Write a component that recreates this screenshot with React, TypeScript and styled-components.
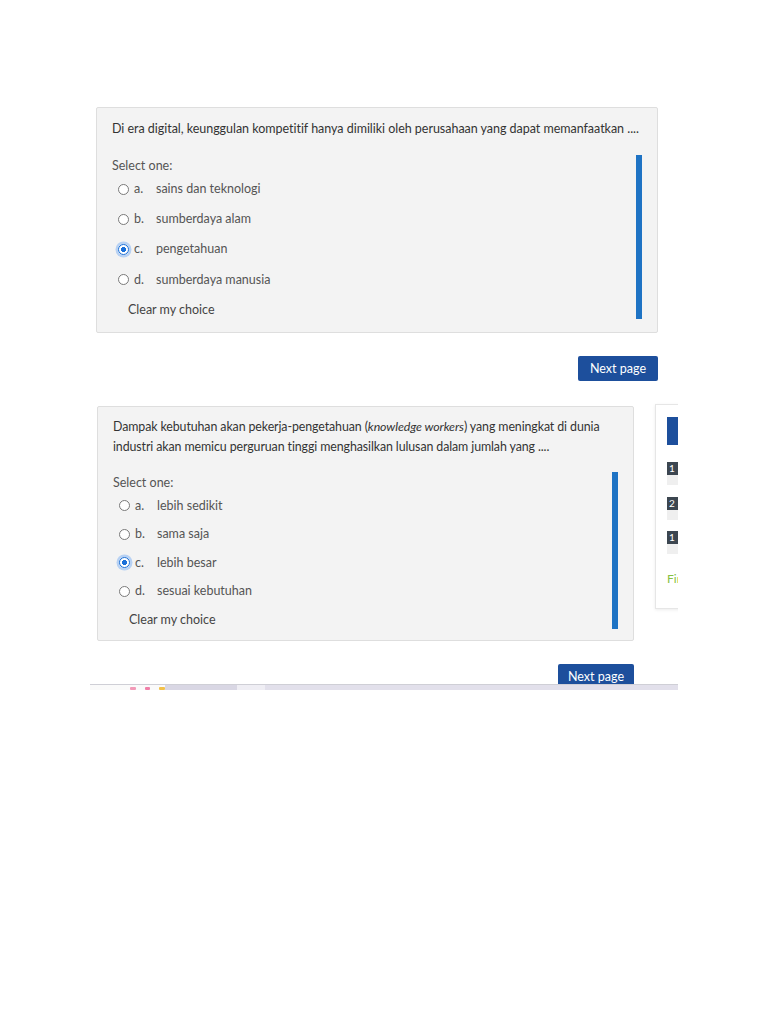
import React from 'react';
import styled, { createGlobalStyle, css } from 'styled-components';

const COLORS = {
  card: '#f3f3f3',
  border: '#dedede',
  text: '#3a3a3a',
  muted: '#555',
  accent: '#1e73c4',
  button: '#1d4f9c',
  dark: '#3c4650',
  green: '#86c143'
};

type Question = {
  text: React.ReactNode;
  options: string[];
  selected: number;
};

const questions: Question[] = [
  {
    text: 'Di era digital, keunggulan kompetitif hanya dimiliki oleh perusahaan yang dapat memanfaatkan ....',
    options: ['sains dan teknologi', 'sumberdaya alam', 'pengetahuan', 'sumberdaya manusia'],
    selected: 2
  },
  {
    text: (
      <>
        Dampak kebutuhan akan pekerja-pengetahuan (<em>knowledge workers</em>) yang meningkat di dunia
        industri akan memicu perguruan tinggi menghasilkan lulusan dalam jumlah yang ....
      </>
    ),
    options: ['lebih sedikit', 'sama saja', 'lebih besar', 'sesuai kebutuhan'],
    selected: 2
  }
];

const letters = ['a.', 'b.', 'c.', 'd.'];

// One quiz question card with its radio answers
const QuestionCard = ({
  question,
  width,
  compact
}: {
  question: Question;
  width: number;
  compact?: boolean;
}) => (
  <Card $width={width} $compact={compact}>
    <QText $compact={compact}>{question.text}</QText>
    <Answers>
      <Prompt $compact={compact}>Select one:</Prompt>
      {question.options.map((opt, i) => (
        <Option key={opt} $compact={compact}>
          <Radio $checked={i === question.selected} />
          <Letter>{letters[i]}</Letter>
          <span>{opt}</span>
        </Option>
      ))}
      <Clear>Clear my choice</Clear>
    </Answers>
  </Card>
);

const App = () => (
  <>
    <GlobalStyle />
    <Frame>
      <Indent $left={6}>
        <QuestionCard question={questions[0]} width={562} />
      </Indent>
      <NavRow $width={568} $top={23} $bottom={23}>
        <NextButton>Next page</NextButton>
      </NavRow>
      <Row>
        <QuestionCard question={questions[1]} width={537} compact />
        <SidePanel>
          <SideHeader />
          <NavBlock>1</NavBlock>
          <NavBlock>2</NavBlock>
          <NavBlock>1</NavBlock>
          <FinishText>Finish attempt</FinishText>
        </SidePanel>
      </Row>
      <NavRow $width={544} $top={23} $bottom={0}>
        <NextButton $compact>Next page</NextButton>
      </NavRow>
    </Frame>
    <TaskStrip>
      <StripSegment $w={75} $bg="#fafafa">
        <Dots>
          <Dot $c="#f29ab8" />
          <Dot $c="#f07fa8" />
          <Dot $c="#f2c14a" />
        </Dots>
      </StripSegment>
      <StripSegment $w={72} $bg="#d9d7e4" />
      <StripSegment $w={28} $bg="#efeef4" />
      <StripSegment $w={413} $bg="#e2e0eb" />
    </TaskStrip>
  </>
);

export default App;

const GlobalStyle = createGlobalStyle`
  body {
    margin: 0;
    background: #fff;
    font-family: Lato, 'Open Sans', sans-serif;
    color: ${COLORS.text};
  }
`;

const Frame = styled.div`
  width: 588px;
  height: 577px;
  margin-left: 90px;
  padding-top: 107px;
  overflow: hidden;
`;

const Indent = styled.div<{ $left: number }>`
  padding-left: ${({ $left }) => $left}px;
`;

const Card = styled.div<{ $width: number; $compact?: boolean }>`
  box-sizing: border-box;
  flex-shrink: 0;
  width: ${({ $width }) => $width}px;
  background: ${COLORS.card};
  border: 1px solid ${COLORS.border};
  border-radius: 2px;
  padding: ${({ $compact }) => ($compact ? '10px 15px 11px 15px' : '12px 15px 13px 15px')};
  ${({ $compact }) =>
    $compact &&
    css`
      margin-left: 7px;
      margin-top: 2px;
    `}
`;

const QText = styled.div<{ $compact?: boolean }>`
  font-size: ${({ $compact }) => ($compact ? '12.4px' : '12.5px')};
  line-height: ${({ $compact }) => ($compact ? '20px' : '18px')};
  color: #333;
  letter-spacing: ${({ $compact }) => ($compact ? '-0.1px' : '-0.03px')};
  margin-bottom: ${({ $compact }) => ($compact ? '15px' : '17px')};
`;

const Answers = styled.div`
  border-right: 6px solid ${COLORS.accent};
  padding-top: 1px;
  font-size: 12.5px;
  color: ${COLORS.muted};
`;

const Prompt = styled.div<{ $compact?: boolean }>`
  line-height: 18px;
  padding-top: 1px;
  margin-bottom: ${({ $compact }) => ($compact ? '5px' : '5px')};
`;

const Option = styled.div<{ $compact?: boolean }>`
  display: flex;
  align-items: center;
  height: 18px;
  margin-bottom: ${({ $compact }) => ($compact ? '10.5px' : '12.2px')};
  padding-left: 6px;
  line-height: 18px;
`;

const Radio = styled.span<{ $checked?: boolean }>`
  box-sizing: border-box;
  display: inline-block;
  width: 11px;
  height: 11px;
  border-radius: 50%;
  margin-right: 5px;
  border: 1.5px solid #7a7a7a;
  background: #fff;
  ${({ $checked }) =>
    $checked &&
    css`
      border: 1.5px solid #1a6fd8;
      background: radial-gradient(circle, #1a6fd8 0 2.4px, #fff 2.8px);
      box-shadow: 0 0 0 2.5px #b7d1f3;
    `}
`;

const Letter = styled.span`
  display: inline-block;
  width: 22px;
`;

const Clear = styled.div`
  padding-left: 16px;
  line-height: 18px;
  margin-top: 4px;
  color: #444;
`;

const NavRow = styled.div<{ $width: number; $top: number; $bottom: number }>`
  display: flex;
  justify-content: flex-end;
  width: ${({ $width }) => $width}px;
  margin-top: ${({ $top }) => $top}px;
  margin-bottom: ${({ $bottom }) => $bottom}px;
`;

const NextButton = styled.button<{ $compact?: boolean }>`
  width: ${({ $compact }) => ($compact ? '76px' : '80px')};
  height: 25px;
  border: none;
  border-radius: 2px;
  background: ${COLORS.button};
  color: #fff;
  font-family: Lato, 'Open Sans', sans-serif;
  font-size: 12.5px;
  padding: 0;
`;

const Row = styled.div`
  display: flex;
  align-items: flex-start;
  gap: 21px;
`;

const SidePanel = styled.div`
  box-sizing: border-box;
  flex-shrink: 0;
  width: 180px;
  height: 205px;
  background: #fff;
  border: 1px solid #e6e6e6;
  box-shadow: 0 1px 3px rgba(0, 0, 0, 0.08);
  padding: 12px 11px;
`;

const SideHeader = styled.div`
  height: 28px;
  background: ${COLORS.button};
  margin-bottom: 17px;
`;

const NavBlock = styled.div`
  width: 30px;
  height: 23px;
  margin-bottom: 12px;
  background: linear-gradient(${COLORS.dark} 0 13px, #efefef 13px);
  color: #fff;
  font-size: 10px;
  line-height: 13px;
  padding-left: 2px;
  &:nth-of-type(3) {
    margin-bottom: 11px;
  }
`;

const FinishText = styled.div`
  margin-top: 17px;
  font-size: 12px;
  color: ${COLORS.green};
`;

const TaskStrip = styled.div`
  display: flex;
  margin-left: 90px;
  width: 588px;
  height: 6px;
`;

const StripSegment = styled.div<{ $w: number; $bg: string }>`
  width: ${({ $w }) => $w}px;
  background: ${({ $bg }) => $bg};
  border-top: 1px solid #cfcfd6;
  box-sizing: border-box;
`;

const Dots = styled.div`
  display: flex;
  gap: 9px;
  padding: 2px 0 0 40px;
`;

const Dot = styled.span<{ $c: string }>`
  width: 6px;
  height: 3px;
  border-radius: 1px;
  background: ${({ $c }) => $c};
`;
